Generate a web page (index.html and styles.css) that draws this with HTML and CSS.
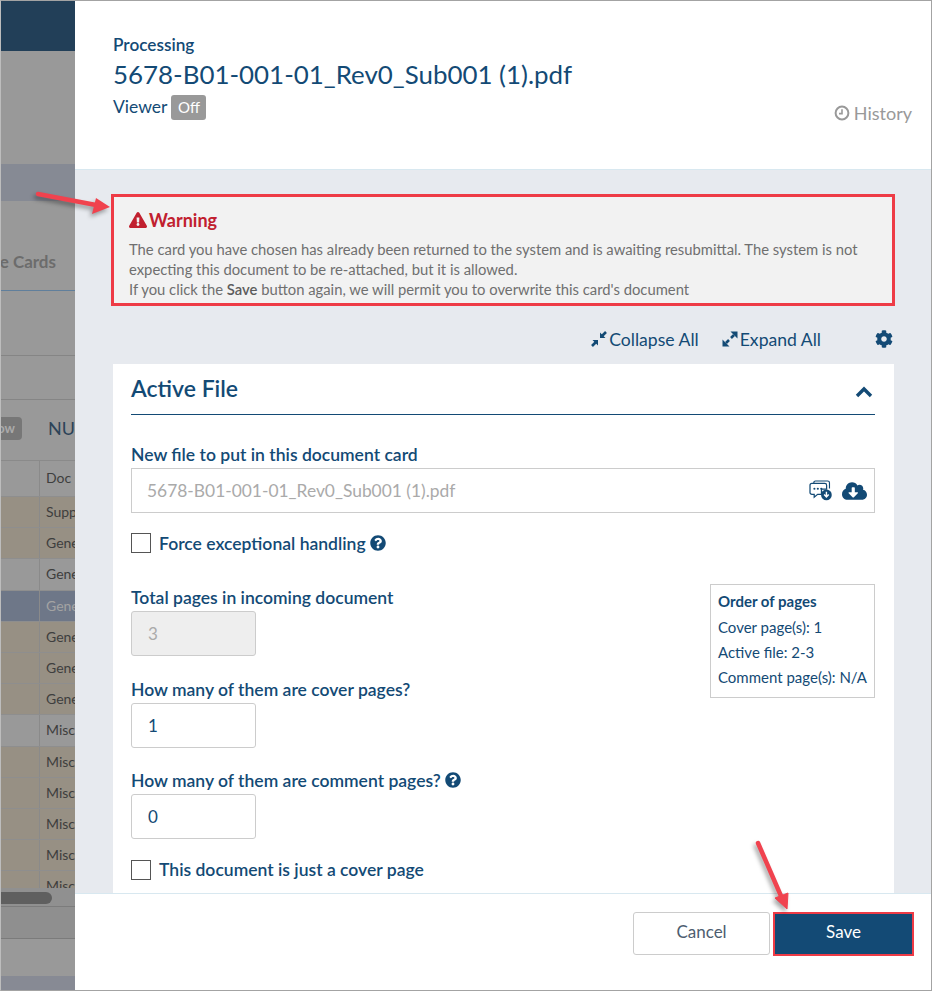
FILE: index.html
```html
<!DOCTYPE html>
<html lang="en">

<head>
    <meta charset="UTF-8">
    <meta name="viewport" content="width=device-width, initial-scale=1.0">
    <title>Processing</title>
    <link rel="stylesheet" href="styles.css">
</head>

<body>
    <div class="frame">
        <!-- page behind the drawer -->
        <div class="backdrop">
            <div class="bg-nav"></div>
            <div class="bg-space"></div>
            <div class="bg-band"></div>
            <div class="bg-tab"><span>Active Cards</span></div>
            <div class="bg-filter"></div>
            <div class="bg-filter2"></div>
            <div class="bg-tools"><span class="bg-btn">Show</span><span class="bg-nu">NU</span></div>
            <div class="bg-table">
                <div class="bg-row head"><span></span><span>Doc Code</span></div>
                <div class="bg-row tan"><span></span><span>Supplier</span></div>
                <div class="bg-row tan"><span></span><span>General</span></div>
                <div class="bg-row"><span></span><span>General</span></div>
                <div class="bg-row picked"><span></span><span>General</span></div>
                <div class="bg-row tan"><span></span><span>General</span></div>
                <div class="bg-row tan"><span></span><span>General</span></div>
                <div class="bg-row tan"><span></span><span>General</span></div>
                <div class="bg-row"><span></span><span>Misc</span></div>
                <div class="bg-row tan"><span></span><span>Misc</span></div>
                <div class="bg-row tan"><span></span><span>Misc</span></div>
                <div class="bg-row tan"><span></span><span>Misc</span></div>
                <div class="bg-row tan"><span></span><span>Misc</span></div>
                <div class="bg-row tan"><span></span><span>Misc</span></div>
            </div>
            <div class="bg-scroll"><div class="bg-thumb"></div></div>
            <div class="bg-foot1"></div>
            <div class="bg-foot2"></div>
            <div class="bg-band2"></div>
        </div>

        <div class="drawer">
            <div class="drawer-head">
                <div>
                    <div class="head-small">Processing</div>
                    <div class="head-title">5678-B01-001-01_Rev0_Sub001 (1).pdf</div>
                    <div class="head-viewer">Viewer <span class="badge">Off</span></div>
                </div>
                <div class="history">
                    <svg class="icon-clock" viewBox="0 0 16 16"><circle cx="8" cy="8" r="6.4" fill="none" stroke="currentColor" stroke-width="2"/><path d="M8 4.2V8.6H5" fill="none" stroke="currentColor" stroke-width="1.6"/></svg>
                    History
                </div>
            </div>

            <div class="drawer-body">
                <div class="warning">
                    <div class="warning-title">
                        <svg class="icon-warn" viewBox="0 0 576 512"><path fill="currentColor" d="M569.517 440.013C587.975 472.007 564.806 512 527.94 512H48.054c-36.937 0-59.999-40.055-41.577-71.987L246.423 23.985c18.467-32.009 64.72-31.951 83.154 0l239.94 416.028zM288 354c-25.405 0-46 20.595-46 46s20.595 46 46 46 46-20.595 46-46-20.595-46-46-46zm-43.673-165.346l7.418 136c.347 6.364 5.609 11.346 11.982 11.346h48.546c6.373 0 11.635-4.982 11.982-11.346l7.418-136c.375-6.874-5.098-12.654-11.982-12.654h-63.383c-6.884 0-12.356 5.78-11.981 12.654z"/></svg>
                        Warning
                    </div>
                    <div class="warning-text">The card you have chosen has already been returned to the system and is awaiting resubmittal. The system is not expecting this document to be re-attached, but it is allowed.<br>If you click the <b>Save</b> button again, we will permit you to overwrite this card's document</div>
                </div>

                <div class="toolbar">
                    <span class="tool">
                        <svg class="icon-arrows" viewBox="0 0 16 16"><path fill="currentColor" d="M9 1.5V7H14.5ZM7 14.5V9H1.5Z"/><path d="M11 5 15 1M5 11 1 15" fill="none" stroke="currentColor" stroke-width="2.6"/></svg>Collapse All
                    </span>
                    <span class="tool">
                        <svg class="icon-arrows" viewBox="0 0 16 16"><path fill="currentColor" d="M8.5 0.5H15.5V7.5ZM7.5 15.5H0.5V8.5Z"/><path d="M12 4 9 7M4 12 7 9" fill="none" stroke="currentColor" stroke-width="2.6"/></svg>Expand All
                    </span>
                    <svg class="icon-cog" viewBox="0 0 512 512"><path fill="currentColor" d="M487.4 315.7l-42.6-24.6c4.3-23.2 4.3-47 0-70.2l42.6-24.6c4.9-2.8 7.1-8.6 5.5-14-11.1-35.6-30-67.8-54.7-94.6-3.8-4.1-10-5.1-14.8-2.3L380.8 110c-17.9-15.4-38.5-27.3-60.8-35.1V25.8c0-5.6-3.9-10.5-9.4-11.7-36.7-8.2-74.3-7.8-109.2 0-5.5 1.2-9.4 6.1-9.4 11.7V75c-22.2 7.9-42.8 19.8-60.8 35.1L88.7 85.5c-4.9-2.8-11-1.9-14.8 2.3-24.7 26.7-43.6 58.9-54.7 94.6-1.7 5.4.6 11.2 5.5 14L67.3 221c-4.3 23.2-4.3 47 0 70.2l-42.6 24.6c-4.9 2.8-7.1 8.6-5.5 14 11.1 35.6 30 67.8 54.7 94.6 3.8 4.1 10 5.1 14.8 2.3l42.6-24.6c17.9 15.4 38.5 27.3 60.8 35.1v49.2c0 5.6 3.9 10.5 9.4 11.7 36.7 8.2 74.3 7.8 109.2 0 5.5-1.2 9.4-6.1 9.4-11.7v-49.2c22.2-7.9 42.8-19.8 60.8-35.1l42.6 24.6c4.9 2.8 11 1.9 14.8-2.3 24.7-26.7 43.6-58.9 54.7-94.6 1.5-5.5-.7-11.3-5.6-14.1zM256 336c-44.1 0-80-35.9-80-80s35.9-80 80-80 80 35.9 80 80-35.9 80-80 80z"/></svg>
                </div>

                <div class="card">
                    <div class="card-head">
                        <h2>Active File</h2>
                        <svg class="icon-chevron" viewBox="0 0 18 12"><path d="M2 10 9 3l7 7" fill="none" stroke="currentColor" stroke-width="3.4"/></svg>
                    </div>

                    <label class="field-label">New file to put in this document card</label>
                    <div class="file-box">
                        <input class="file-input" type="text" value="5678-B01-001-01_Rev0_Sub001 (1).pdf" disabled>
                        <svg class="icon-comment" viewBox="0 0 24 22">
                            <path d="M5 3.5V2.8C5 1.8 5.8 1 6.8 1H19.5C20.6 1 21.4 1.8 21.4 2.8V9" fill="none" stroke="currentColor" stroke-width="1.2"/>
                            <path d="M3 3.5H16.5C17.6 3.5 18.4 4.3 18.4 5.4V9.5H13V15H9L5.4 18V15H3C1.9 15 1 14.1 1 13V5.5C1 4.4 1.9 3.5 3 3.5Z" fill="#fff" stroke="currentColor" stroke-width="1.3"/>
                            <circle cx="5.6" cy="9.2" r="1.1" fill="currentColor"/><circle cx="9.2" cy="9.2" r="1.1" fill="currentColor"/><circle cx="12.8" cy="9.2" r="1.1" fill="currentColor"/>
                            <circle cx="18.2" cy="15.6" r="5.6" fill="currentColor"/>
                            <path d="M18.2 12.2v5M15.8 15.2l2.4 2.6 2.4-2.6" fill="none" stroke="#fff" stroke-width="1.5"/>
                        </svg>
                        <svg class="icon-cloud" viewBox="0 0 640 512"><path fill="currentColor" d="M537.6 226.6c4.1-10.7 6.4-22.4 6.4-34.6 0-53-43-96-96-96-19.7 0-38.1 6-53.3 16.2C367 64.2 315.3 32 256 32c-88.4 0-160 71.6-160 160 0 2.7.1 5.4.2 8.1C40.2 219.8 0 273.2 0 336c0 79.5 64.5 144 144 144h368c70.7 0 128-57.3 128-128 0-61.9-44-113.6-102.4-125.4zm-132.9 88.7L299.3 420.7c-6.2 6.2-16.4 6.2-22.6 0L171.3 315.3c-10.1-10.1-2.9-27.3 11.3-27.3H248V176c0-8.8 7.2-16 16-16h48c8.8 0 16 7.2 16 16v112h65.4c14.2 0 21.4 17.2 11.3 27.3z"/></svg>
                    </div>

                    <div class="check-row first">
                        <input class="check" type="checkbox">
                        <span class="field-label inline">Force exceptional handling</span>
                        <svg class="icon-help" viewBox="0 0 512 512"><use href="#help"/></svg>
                    </div>

                    <div class="pages-row">
                        <div>
                            <label class="field-label">Total pages in incoming document</label>
                            <input class="num-input" type="text" value="3" disabled>

                            <label class="field-label gap">How many of them are cover pages?</label>
                            <input class="num-input" type="text" value="1">

                            <label class="field-label gap-sm">How many of them are comment pages?
                                <svg class="icon-help" viewBox="0 0 512 512"><use href="#help"/></svg>
                            </label>
                            <input class="num-input" type="text" value="0">
                        </div>
                        <div class="order-box">
                            <strong>Order of pages</strong>
                            <div>Cover page(s): 1</div>
                            <div>Active file: 2-3</div>
                            <div>Comment page(s): N/A</div>
                        </div>
                    </div>

                    <div class="check-row last">
                        <input class="check" type="checkbox">
                        <span class="field-label inline">This document is just a cover page</span>
                    </div>
                </div>
            </div>

            <div class="drawer-foot">
                <button class="btn-cancel">Cancel</button>
                <button class="btn-save">Save</button>
            </div>
        </div>

        <!-- help icon shared by the labels -->
        <svg class="defs" width="0" height="0">
            <symbol id="help" viewBox="0 0 512 512"><path fill="currentColor" d="M504 256c0 136.997-111.043 248-248 248S8 392.997 8 256C8 119.083 119.043 8 256 8s248 111.083 248 248zM262.655 90c-54.497 0-89.255 22.957-116.549 63.758-3.536 5.286-2.353 12.415 2.715 16.258l34.699 26.31c5.205 3.947 12.621 3.008 16.665-2.122 17.864-22.658 30.113-35.797 57.303-35.797 20.429 0 45.698 13.148 45.698 32.958 0 14.976-12.363 22.667-32.534 33.976C247.128 238.528 216 254.941 216 296v4c0 6.627 5.373 12 12 12h56c6.627 0 12-5.373 12-12v-1.333c0-28.462 83.186-29.647 83.186-106.667 0-58.002-60.165-102-116.531-102zM256 338c-25.365 0-46 20.635-46 46 0 25.364 20.635 46 46 46s46-20.636 46-46c0-25.365-20.635-46-46-46z"/></symbol>
        </svg>

        <!-- red annotation arrows on top of the screenshot -->
        <svg class="arrows" viewBox="0 0 932 991">
            <path d="M38 194 96 205" fill="none" stroke="#f0424e" stroke-width="4.5" stroke-linecap="round"/>
            <path d="M110 207 96 198 92 214Z" fill="#f0424e"/>
            <path d="M758 843 781 896" fill="none" stroke="#f0424e" stroke-width="4.5" stroke-linecap="round"/>
            <path d="M787 909 775 898 788 893Z" fill="#f0424e" stroke="#f0424e" stroke-width="1"/>
        </svg>
    </div>
</body>

</html>
```

FILE: styles.css
```css
* {
    box-sizing: border-box;
}

body {
    margin: 0;
    font-family: Lato, "Open Sans", sans-serif;
    color: #134a75;
}

.frame {
    position: relative;
    display: flex;
    width: 932px;
    height: 991px;
    overflow: hidden;
    border: 1px solid #a3a3a3;
    border-left-color: #bdbdbd;
}

/* page behind the drawer */
.backdrop {
    width: 74px;
    flex: none;
    overflow: hidden;
    background-color: #999;
    color: #3e3e3e;
    white-space: nowrap;
}

.bg-nav {
    height: 50px;
    background-color: #223f58;
}

.bg-space {
    height: 113px;
}

.bg-band {
    height: 37px;
    background-color: #868a94;
}

.bg-tab {
    display: flex;
    justify-content: flex-end;
    height: 90px;
    padding: 50px 19px 0 0;
    border-bottom: 1px solid #607f9c;
    font-size: 17px;
    font-weight: 700;
    color: #6c6c6c;
}

.bg-filter {
    height: 65px;
    border-bottom: 1px solid #858585;
}

.bg-filter2 {
    height: 44px;
    border-bottom: 1px solid #858585;
}

.bg-tools {
    display: flex;
    align-items: center;
    height: 60px;
    padding-bottom: 4px;
    margin-left: -25px;
}

.bg-btn {
    width: 50px;
    height: 23px;
    margin-right: 26px;
    padding-right: 7px;
    border-radius: 4px;
    background-color: #777;
    color: #aaa;
    font-size: 13px;
    font-weight: 700;
    line-height: 23px;
    text-align: right;
}

.bg-nu {
    font-size: 18px;
    color: #2c4358;
}

.bg-table {
    height: 428px;
    overflow: hidden;
    border-top: 1px solid #8a8a8a;
}

.bg-row {
    display: flex;
    height: 31.2px;
    border-bottom: 1px solid #8e8e8e;
    font-size: 14px;
    line-height: 30px;
}

.bg-row span {
    flex: none;
}

.bg-row span:first-child {
    width: 39px;
    border-right: 1px solid #8a8a8a;
}

.bg-row span:last-child {
    padding-left: 6px;
}

.bg-row.head {
    height: 36px;
    line-height: 34px;
}

.bg-row.tan {
    background-color: #979084;
}

.bg-row.picked {
    background-color: #6e7788;
    color: #a3a3a3;
}

.bg-scroll {
    height: 19px;
    padding-top: 4px;
    background-color: #909090;
    border-bottom: 1px solid #7c7c7c;
}

.bg-thumb {
    width: 51px;
    height: 12px;
    border-radius: 0 6px 6px 0;
    background-color: #5f5f5f;
}

.bg-foot1 {
    height: 32px;
    background-color: #8f8f8f;
    border-bottom: 1px solid #7b7b7b;
}

.bg-foot2 {
    height: 37px;
}

.bg-band2 {
    height: 15px;
    background-color: #878a94;
}

/* drawer */
.drawer {
    flex: 1;
    display: flex;
    flex-direction: column;
    min-width: 0;
}

.drawer-head {
    display: flex;
    justify-content: space-between;
    height: 169px;
    padding: 34px 19px 0 38px;
    background-color: #fff;
    border-bottom: 1px solid #d8e8f0;
}

.head-small {
    font-size: 17.2px;
    font-weight: 600;
    line-height: 20px;
}

.head-title {
    margin-top: 3px;
    font-size: 25.9px;
    line-height: 32px;
}

.head-viewer {
    display: flex;
    align-items: center;
    gap: 4px;
    margin-top: 4px;
    font-size: 17.5px;
    line-height: 26px;
}

.badge {
    width: 35px;
    height: 25px;
    border-radius: 3px;
    background-color: #999;
    color: #fff;
    font-size: 15px;
    line-height: 25px;
    text-align: center;
}

.history {
    display: flex;
    align-items: center;
    gap: 4px;
    height: 26px;
    margin-top: 65px;
    font-size: 18px;
    color: #999;
}

.icon-clock {
    width: 16px;
    height: 16px;
}

.drawer-body {
    flex: 1;
    display: flex;
    flex-direction: column;
    min-height: 0;
    padding: 24px 37px 0 36px;
    overflow: hidden;
    background-color: #e7eaef;
}

.warning {
    height: 112px;
    margin-right: -1px;
    padding: 11px 15px 0;
    background-color: #f2f2f2;
    border: 3px solid #ee3b46;
}

.warning-title {
    display: flex;
    align-items: center;
    gap: 2px;
    font-size: 18px;
    font-weight: 700;
    line-height: 24px;
    color: #c1202f;
}

.icon-warn {
    width: 18px;
    height: 16px;
}

.warning-text {
    margin-top: 7px;
    font-size: 14.8px;
    line-height: 20px;
    color: #6f6f6f;
}

.warning-text b {
    font-weight: 600;
    color: #5c5c5c;
}

.toolbar {
    display: flex;
    align-items: center;
    justify-content: flex-end;
    height: 58px;
    margin-right: -1px;
    padding: 8px 2px 0 0;
    font-size: 17.6px;
}

.tool {
    display: flex;
    align-items: center;
    gap: 2px;
    margin-right: 23px;
}

.icon-arrows {
    width: 16px;
    height: 16px;
}

.icon-cog {
    width: 18px;
    height: 18px;
    margin-left: 31px;
}

.card {
    flex: 1;
    margin-left: 2px;
    padding: 0 19px 0 18px;
    background-color: #fff;
}

.card-head {
    display: flex;
    align-items: center;
    justify-content: space-between;
    height: 51px;
    margin-bottom: 28px;
    padding-right: 2px;
    border-bottom: 1px solid #134a75;
}

h2 {
    margin: 0 0 2px;
    font-size: 23px;
    font-weight: 600;
    line-height: 48px;
}

.icon-chevron {
    width: 18px;
    height: 12px;
    margin-top: 6px;
}

.field-label {
    display: block;
    font-size: 17.55px;
    font-weight: 600;
    line-height: 23px;
}

.field-label.inline {
    display: inline;
}

.field-label.gap {
    margin-top: 22px;
}

.field-label.gap-sm {
    margin-top: 21px;
}

.file-box {
    display: flex;
    align-items: center;
    height: 45px;
    margin-top: 2px;
    padding: 0 7px 0 15px;
    border: 1px solid #ccc;
}

.file-input {
    flex: 1;
    min-width: 0;
    padding: 0;
    border: none;
    background: none;
    font: 17.4px Lato, sans-serif;
    color: #aaa;
}

.icon-comment {
    width: 23px;
    height: 21px;
    margin-right: 10px;
}

.icon-cloud {
    width: 25px;
    height: 20px;
}

.check-row {
    display: flex;
    align-items: center;
    gap: 8px;
}

.check-row .icon-help {
    margin-left: -4px;
}

.check-row.first {
    margin-top: 18.5px;
}

.check-row.last {
    margin-top: 19px;
}

.check {
    appearance: none;
    width: 20px;
    height: 20px;
    margin: 0;
    background-color: #fff;
    border: 1px solid #555;
}

.icon-help {
    width: 16px;
    height: 16px;
    vertical-align: -1px;
}

.pages-row {
    display: flex;
    justify-content: space-between;
    align-items: flex-start;
    margin-top: 29.5px;
}

.pages-row > div:first-child {
    padding-top: 2px;
}

.num-input {
    display: block;
    width: 125px;
    height: 45px;
    margin-top: 2px;
    padding: 0 16px;
    border: 1px solid #ccc;
    border-radius: 3px;
    background-color: #fff;
    font: 17px Lato, sans-serif;
    color: #134a75;
}

.num-input:disabled {
    background-color: #eee;
    color: #aaa;
}

.order-box {
    width: 165px;
    height: 114px;
    padding: 4px 7px 0;
    border: 1px solid #ccc;
    font-size: 15px;
    line-height: 25px;
}

.order-box strong {
    display: block;
    margin-bottom: 1px;
    font-weight: 700;
}

.drawer-foot {
    display: flex;
    justify-content: flex-end;
    gap: 3px;
    height: 97px;
    padding: 18px 17px 0 0;
    background-color: #fff;
    border-top: 1px solid #d8e8f0;
}

.drawer-foot button {
    padding: 0 0 4px;
    font-family: Lato, sans-serif;
    font-size: 17px;
    cursor: pointer;
}

.btn-cancel {
    width: 137px;
    height: 43px;
    border: 1px solid #ccc;
    border-radius: 3px;
    background-color: #fff;
    color: #4d5d70;
}

.drawer-foot .btn-save {
    width: 141px;
    height: 44px;
    padding-bottom: 6px;
    border: 2px solid #ee3b46;
    background-color: #134a75;
    color: #fff;
}

/* annotations */
.arrows {
    position: absolute;
    top: -1px;
    left: -1px;
    width: 932px;
    height: 991px;
    pointer-events: none;
    filter: drop-shadow(-2px 3px 2px rgba(0, 0, 0, 0.35));
}

.defs {
    position: absolute;
}
```
